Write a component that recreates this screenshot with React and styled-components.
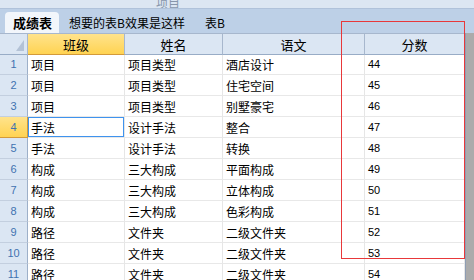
import React from "react";
import styled, { createGlobalStyle } from "styled-components";

const Global = createGlobalStyle`
  html, body { margin: 0; padding: 0; background: #ffffff; overflow: hidden; }
  body { font-family: "Noto Sans CJK SC", "Liberation Sans", sans-serif; }
`;

const Frame = styled.div`
  position: relative;
  width: 474px;
  height: 280px;
  overflow: hidden;
  display: flex;
  flex-direction: column;
  background: #ffffff;
`;

const TitleBar = styled.div`
  height: 8px;
  flex: none;
  background: #dce6f2;
  border-bottom: 1px solid #b0c2da;
  display: flex;
  align-items: flex-end;
  padding-left: 156px;
  overflow: hidden;
`;

const TitleText = styled.span`
  font-size: 12px;
  line-height: 14px;
  color: #8796ab;
  margin-bottom: -2px;
`;

const TabStrip = styled.div`
  height: 24px;
  flex: none;
  background: #bdd0e7;
  display: flex;
  align-items: flex-end;
  padding-left: 5px;
`;

const Tab = styled.div`
  height: 21px;
  display: flex;
  align-items: center;
  padding: 0 ${(p) => (p.$active ? "7px 0 8px" : "10px")};
  font-size: ${(p) => (p.$active ? "13px" : "12px")};
  font-weight: ${(p) => (p.$active ? 700 : 400)};
  color: #000;
  background: ${(p) => (p.$active ? "#f2f6fb" : "transparent")};
  border-radius: ${(p) => (p.$active ? "4px 4px 0 0" : "0")};
  white-space: nowrap;
`;

const Body = styled.div`
  flex: 1;
  display: flex;
  min-height: 0;
`;

const Sheet = styled.div`
  display: grid;
  grid-template-columns: 28px 97px 98px 142px 100px;
  grid-auto-rows: 21px;
  align-content: start;
  width: 465px;
  flex: none;
`;

const Scrollbar = styled.div`
  flex: 1;
  background: #ababab;
  border-left: 1px solid #8e9db3;
`;

const HeadCell = styled.div`
  height: 22px;
  box-sizing: border-box;
  border-top: 1px solid #a7b7cd;
  border-bottom: 1px solid ${(p) => (p.$sel ? "#d39a3a" : "#98acc6")};
  border-right: 1px solid ${(p) => (p.$last ? "#8a9ab0" : "#a7b7cd")};
  background: ${(p) =>
    p.$sel
      ? "linear-gradient(#ffe38c, #ffd352)"
      : "#dbe6f3"};
  display: flex;
  align-items: center;
  justify-content: center;
  font-size: 13px;
  color: #000;
  position: relative;
`;

const CornerMark = styled.svg`
  position: absolute;
  right: 3px;
  bottom: 3px;
`;

const RowHead = styled.div`
  box-sizing: border-box;
  border-right: 1px solid ${(p) => (p.$sel ? "#d39a3a" : "#9db0c9")};
  border-bottom: 1px solid ${(p) => (p.$sel ? "#d39a3a" : "#c3cfdf")};
  background: ${(p) =>
    p.$sel ? "linear-gradient(#ffe38c, #ffd352)" : "#dbe6f3"};
  display: flex;
  align-items: center;
  justify-content: center;
  font-family: "Liberation Sans", sans-serif;
  font-size: 11px;
  color: #3f72b0;
`;

const Cell = styled.div`
  box-sizing: border-box;
  border-right: 1px solid #e6e6e6;
  border-bottom: 1px solid #e8e8e8;
  display: flex;
  align-items: center;
  padding-left: ${(p) => (p.$num ? "3px" : "3px")};
  font-family: ${(p) =>
    p.$num
      ? '"Liberation Sans", sans-serif'
      : '"Noto Sans CJK SC", sans-serif'};
  font-size: ${(p) => (p.$num ? "11px" : "12px")};
  color: #000;
  white-space: nowrap;
  overflow: hidden;
  box-shadow: ${(p) => (p.$focus ? "inset 0 0 0 1px #3f93ee" : "none")};
`;

const Highlight = styled.div`
  position: absolute;
  left: 341px;
  top: 21px;
  width: 124px;
  height: 238px;
  box-sizing: border-box;
  border: 1px solid #e8383a;
  pointer-events: none;
`;

const rows = [
  ["项目", "项目类型", "酒店设计", "44"],
  ["项目", "项目类型", "住宅空间", "45"],
  ["项目", "项目类型", "别墅豪宅", "46"],
  ["手法", "设计手法", "整合", "47"],
  ["手法", "设计手法", "转换", "48"],
  ["构成", "三大构成", "平面构成", "49"],
  ["构成", "三大构成", "立体构成", "50"],
  ["构成", "三大构成", "色彩构成", "51"],
  ["路径", "文件夹", "二级文件夹", "52"],
  ["路径", "文件夹", "二级文件夹", "53"],
  ["路径", "文件夹", "二级文件夹", "54"],
];

export default function App() {
  return (
    <Frame>
      <Global />
      <TitleBar>
        <TitleText>项目</TitleText>
      </TitleBar>
      <TabStrip>
        <Tab $active>成绩表</Tab>
        <Tab>想要的表B效果是这样</Tab>
        <Tab>表B</Tab>
      </TabStrip>
      <Body>
        <Sheet>
          <HeadCell>
            <CornerMark width="8" height="11" viewBox="0 0 8 11">
              <polygon points="8,0 8,11 0,11" fill="#b3c2d6" />
            </CornerMark>
          </HeadCell>
          <HeadCell $sel>班级</HeadCell>
          <HeadCell>姓名</HeadCell>
          <HeadCell>语文</HeadCell>
          <HeadCell $last>分数</HeadCell>
          {rows.map((r, i) => (
            <React.Fragment key={i}>
              <RowHead $sel={i === 3}>{i + 1}</RowHead>
              <Cell $focus={i === 3}>{r[0]}</Cell>
              <Cell>{r[1]}</Cell>
              <Cell>{r[2]}</Cell>
              <Cell $num>{r[3]}</Cell>
            </React.Fragment>
          ))}
        </Sheet>
        <Scrollbar />
      </Body>
      <Highlight />
    </Frame>
  );
}
